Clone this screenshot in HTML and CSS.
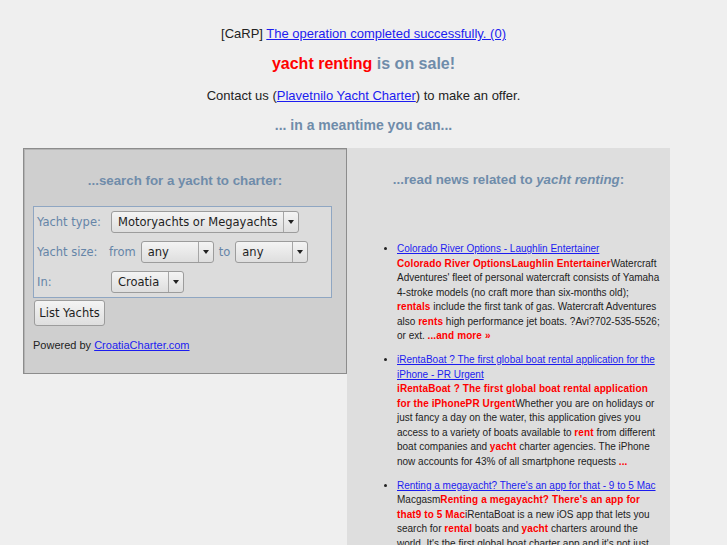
FILE: index.html
```html
<!DOCTYPE html>
<html lang="en">
<head>
    <meta charset="UTF-8">
    <title>yacht renting is on sale!</title>
    <link rel="stylesheet" href="styles.css">
</head>
<body>
    <div class="intro">
        <p class="carp">[CaRP] <a href="#">The operation completed successfully. (0)</a></p>
        <h1 class="sale"><span class="hot">yacht renting</span> is on sale!</h1>
        <p class="contact">Contact us (<a href="#">Plavetnilo Yacht Charter</a>) to make an offer.</p>
        <h2 class="meantime">... in a meantime you can...</h2>
    </div>

    <div class="panels">
        <div class="search">
            <h3>...search for a yacht to charter:</h3>
            <form class="search-form">
                <div class="fields">
                    <label>Yacht type:</label>
                    <div class="ctrl">
                        <span class="select wide"><select><option>Motoryachts or Megayachts</option></select><span class="arrow"></span></span>
                    </div>

                    <label>Yacht size:</label>
                    <div class="ctrl">
                        <span class="word">from</span>
                        <span class="select"><select><option>any</option></select><span class="arrow"></span></span>
                        <span class="word">to</span>
                        <span class="select"><select><option>any</option></select><span class="arrow"></span></span>
                    </div>

                    <label>In:</label>
                    <div class="ctrl">
                        <span class="select"><select><option>Croatia</option></select><span class="arrow"></span></span>
                    </div>
                </div>
                <button type="button">List Yachts</button>
            </form>
            <p class="powered">Powered by <a href="#">CroatiaCharter.com</a></p>
        </div>

        <div class="news">
            <h3>...read news related to <em>yacht renting</em>:</h3>
            <ul>
                <li>
                    <a href="#">Colorado River Options - Laughlin Entertainer</a><br>
                    <b>Colorado River OptionsLaughlin Entertainer</b>Watercraft Adventures' fleet of personal watercraft consists of Yamaha 4-stroke models (no craft more than six-months old); <b>rentals</b> include the first tank of gas. Watercraft Adventures also <b>rents</b> high performance jet boats. ?Avi?702-535-5526; or ext. <b>...and more &raquo;</b>
                </li>
                <li>
                    <a href="#">iRentaBoat ? The first global boat rental application for the iPhone - PR Urgent</a><br>
                    <b>iRentaBoat ? The first global boat rental application for the iPhonePR Urgent</b>Whether you are on holidays or just fancy a day on the water, this application gives you access to a variety of boats available to <b>rent</b> from different boat companies and <b>yacht</b> charter agencies. The iPhone now accounts for 43% of all smartphone requests <b>...</b>
                </li>
                <li>
                    <a href="#">Renting a megayacht? There's an app for that - 9 to 5 Mac</a><br>
                    Macgasm<b>Renting a megayacht? There's an app for that9 to 5 Mac</b>iRentaBoat is a new iOS app that lets you search for <b>rental</b> boats and <b>yacht</b> charters around the world. It's the first global boat charter app and it's not just for yachts either <b>...</b>
                </li>
            </ul>
        </div>
    </div>
</body>
</html>
```

FILE: styles.css
```css
body {
    margin: 0;
    background-color: #efefef;
    font-family: "Liberation Sans", Arial, sans-serif;
    font-size: 13px;
    color: #222;
}

a {
    color: #1c1cf0;
}

.intro {
    text-align: center;
    padding-top: 26px;
}

.carp {
    margin: 0;
    line-height: 16px;
}

.sale {
    margin: 12px 0 0;
    font-size: 16px;
    line-height: 19px;
    color: #6f8caa;
}

.hot {
    color: #f00;
}

.contact {
    margin: 15px 0 0;
    line-height: 16px;
}

.meantime {
    margin: 13px 0 0;
    font-size: 14px;
    line-height: 17px;
    color: #6f8caa;
}

.panels {
    display: flex;
    align-items: flex-start;
    margin: 14px 0 0 23px;
    width: 647px;
}

.search {
    width: 324px;
    box-sizing: border-box;
    background: #cfcfcf;
    border: 1px solid #8c8c8c;
    box-shadow: inset 1px 1px 0 #b4b4b4;
    padding: 0 9px 21px;
}

.search h3,
.news h3 {
    margin: 24px 0 0;
    text-align: center;
    font-size: 13.3px;
    line-height: 16px;
    color: #6f8caa;
}

.search-form {
    margin-top: 17px;
}

.fields {
    display: grid;
    grid-template-columns: 72px auto;
    grid-auto-rows: 22px;
    row-gap: 8px;
    align-items: center;
    width: 299px;
    box-sizing: border-box;
    padding: 4px 3px;
    background: #dcdcdc;
    border: 1px solid #8fa6c2;
    font-family: "DejaVu Sans", sans-serif;
    font-size: 11.5px;
    color: #6585a8;
}

.ctrl {
    display: flex;
    align-items: center;
}

.word {
    margin-right: 5px;
}

.word + .select + .word {
    margin-left: 5px;
    margin-right: 5px;
}

.select {
    display: inline-flex;
    box-sizing: border-box;
    width: 73px;
    height: 22px;
    border: 1px solid #9c9c9c;
    border-radius: 3px;
    background: linear-gradient(#f4f4f4, #dedede);
}

.fields > .ctrl > .select:first-child {
    margin-left: 2px;
}

.select.wide {
    width: 188px;
}

.select select {
    flex: 1;
    min-width: 0;
    appearance: none;
    -webkit-appearance: none;
    border: none;
    background: transparent;
    padding: 0 0 0 6px;
    font-family: "DejaVu Sans", sans-serif;
    font-size: 11.5px;
    color: #1e1e1e;
}

.arrow {
    position: relative;
    width: 14px;
    border-left: 1px solid #a6a6a6;
}

.arrow::after {
    content: "";
    position: absolute;
    left: 4px;
    top: 8px;
    border-left: 3px solid transparent;
    border-right: 3px solid transparent;
    border-top: 4px solid #222;
}

button {
    display: block;
    margin: 2px 0 0 1px;
    width: 71px;
    height: 26px;
    padding: 0;
    border: 1px solid #9c9c9c;
    border-radius: 3px;
    background: linear-gradient(#f4f4f4, #dedede);
    font-family: "DejaVu Sans", sans-serif;
    font-size: 11.5px;
    color: #1e1e1e;
}

.powered {
    margin: 12px 0 0;
    font-size: 11px;
    line-height: 14px;
}

.news {
    width: 323px;
    box-sizing: border-box;
    background: #dedede;
    padding: 0 10px 20px;
    font-size: 10px;
    line-height: 14.5px;
}

.news h3 em {
    font-style: italic;
}

.news ul {
    margin: 54px 0 0;
    padding-left: 40px;
}

.news li {
    margin-bottom: 9.5px;
}

.news b {
    color: #f00;
    letter-spacing: 0.1px;
}
```
